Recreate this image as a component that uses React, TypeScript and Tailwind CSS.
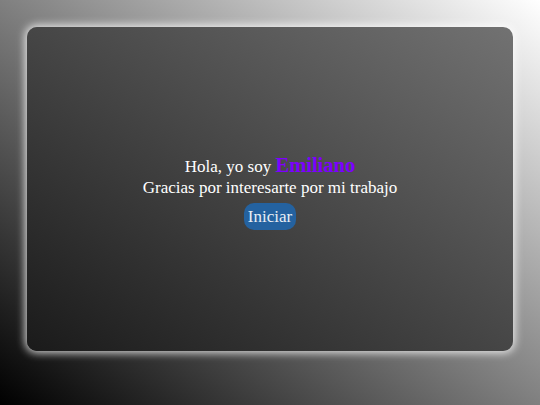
export default function App() {
  return (
    <div className="w-[540px] h-[405px] overflow-hidden bg-[linear-gradient(to_top_right,#000000,#ffffff)] pt-[27px] font-['Liberation_Serif',serif]">
      <div className="mx-auto w-[486px] h-[324px] rounded-[10px] bg-[linear-gradient(to_top_right,#1a1a1a,#727272)] shadow-[0_0_8px_2px_rgba(255,255,255,0.8)] flex flex-col items-center justify-center text-white text-[17px] leading-[21px]">
        <p className="mt-[7px]">
          Hola, yo soy <span className="font-bold text-[#7d00ff] text-[20.5px]">Emiliano</span>
        </p>
        <p>Gracias por interesarte por mi trabajo</p>
        <button className="mt-[5px] h-[27px] px-[4px] rounded-[10px] bg-[#2462a0] text-[#e8eef5] text-[17px] leading-none">
          Iniciar
        </button>
      </div>
    </div>
  );
}
